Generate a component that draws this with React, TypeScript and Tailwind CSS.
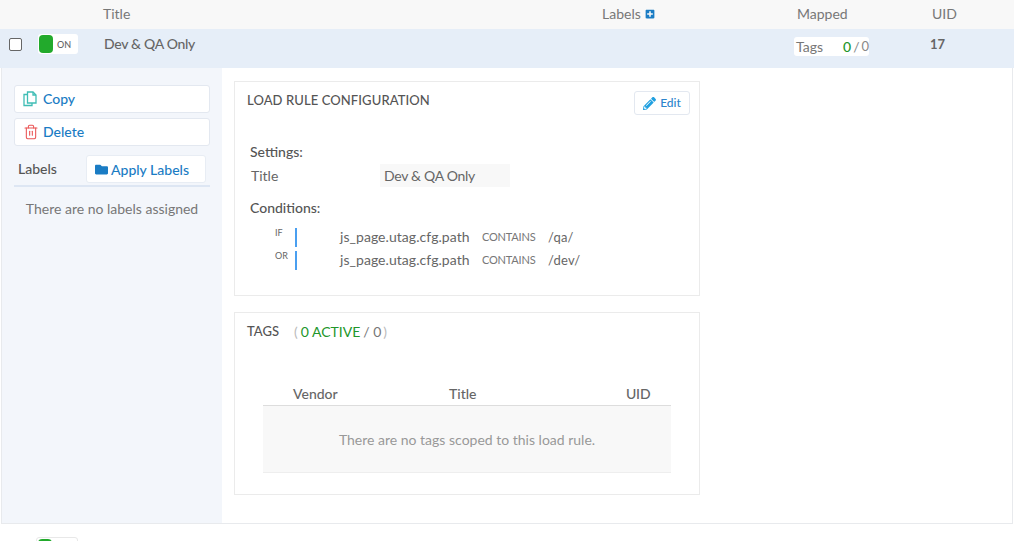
import React from "react";
import { Trash2 } from "lucide-react";
import { FaFolder, FaPencilAlt, FaPlusSquare } from "react-icons/fa";

function CopyIcon() {
  return (
    <svg width="14" height="16" viewBox="0 0 14 16" fill="none" stroke="#3fbdb5" strokeWidth="1.3" className="shrink-0">
      <path d="M4.500 1h5.500l3 3v8h-8.500z" />
      <path d="M10 1v3h3" />
      <path d="M4.500 3.500H1v11h8v-2.500" />
    </svg>
  );
}

function Toggle() {
  return (
    <div className="flex h-[20px] w-[40px] items-center rounded-[3px] bg-white pl-px">
      <div className="h-[18px] w-[14px] rounded-[4px] bg-[#22aa2c]" />
      <span className="ml-[4px] mt-[2px] text-[9px] font-medium tracking-[0.1px] text-[#666]">ON</span>
    </div>
  );
}

function SideButton({ icon, label }: { icon: React.ReactNode; label: string }) {
  return (
    <div className="flex h-[28px] items-center rounded-[3px] border border-[#e3e8f0] bg-white pb-px pl-[8px] text-[14px] font-medium text-[#1a7cc4]">
      <span className="flex w-[20px] shrink-0 items-center">{icon}</span>
      {label}
    </div>
  );
}

function Condition({ op, value }: { op: string; value: string }) {
  return (
    <div className="flex h-[23px] items-start">
      <span className="w-[48px] pl-[28px] text-[9px] leading-[12px] text-[#666]">{op}</span>
      <span className="mt-px h-[19px] w-[2px] bg-[#4a9ff0]" />
      <span className="ml-[43px] w-[142px] text-[14px] leading-[20px] tracking-[0.05px] text-[#666]">js_page.utag.cfg.path</span>
      <span className="w-[66px] text-[11px] leading-[20px] tracking-[-0.2px] text-[#777]">CONTAINS</span>
      <span className="text-[13px] leading-[20px] tracking-[0.2px] text-[#666]">{value}</span>
    </div>
  );
}

export default function App() {
  return (
    <div className="h-[541px] w-[1014px] overflow-hidden bg-white text-[14px] text-[#666] [font-family:Lato,'Liberation_Sans',sans-serif]">
      <div className="flex h-[29px] items-center bg-[#f8f8f8] pb-[2px] text-[14px] text-[#777]">
        <span className="ml-[103px] w-[499px]">Title</span>
        <span className="flex w-[195px] items-center gap-[4px]">
          Labels <FaPlusSquare className="mt-px h-[10px] w-[10px] text-[#1a7cc4]" />
        </span>
        <span className="w-[135px]">Mapped</span>
        <span>UID</span>
      </div>

      <div className="flex h-[39px] bg-[#e6eef8]">
        <div className="ml-[9px] mt-[9px] h-[13px] w-[13px] rounded-[2px] border border-[#666] bg-white" />
        <div className="ml-[16px] mt-[5px]">
          <Toggle />
        </div>
        <span className="ml-[26px] mt-[4px] w-[690px] font-medium tracking-[-0.3px] text-[#666]">Dev &amp; QA Only</span>
        <div className="mt-[8px] flex h-[19px] w-[75px] items-center rounded-[3px] bg-white pl-[2px] text-[#777]">
          <span className="w-[47px]">Tags</span>
          <span className="font-medium text-[#22962a]">0</span>
          <span className="ml-[2px] text-[#888]">/</span>
          <span className="ml-[2px] text-[13px] text-[#888]">0</span>
        </div>
        <span className="ml-[61px] mt-[6px] text-[13px] font-bold text-[#666]">17</span>
      </div>

      <div className="ml-px flex h-[456px] w-[1012px] border border-t-0 border-[#e8eaed]">
        <aside className="flex w-[220px] shrink-0 flex-col bg-[#f3f6fb] px-[12px] pt-[17px]">
          <div className="flex flex-col gap-[5px]">
            <SideButton icon={<CopyIcon />} label="Copy" />
            <SideButton icon={<Trash2 size={16} strokeWidth={1.6} color="#ea5455" />} label="Delete" />
          </div>
          <div className="mt-[9px] flex h-[32px] items-start border-b-2 border-[#dde6f3]">
            <span className="ml-[4px] mt-[3px] w-[68px] font-medium text-[#555]">Labels</span>
            <div className="flex h-[28px] w-[120px] items-center rounded-[3px] border border-[#e8edf4] bg-white pl-[8px] font-medium text-[#1a7cc4]">
              <FaFolder className="mr-[3px] h-[13px] w-[13px]" />
              Apply Labels
            </div>
          </div>
          <p className="mt-[11px] text-center text-[#777]">There are no labels assigned</p>
        </aside>

        <main className="w-[478px] pl-[12px] pt-[13px]">
          <section className="h-[215px] w-[466px] border border-[#ebebeb] pl-[12px]">
            <div className="flex items-start justify-between pr-[9px]">
              <h2 className="mt-[9px] text-[13px] font-medium tracking-[0.1px] text-[#555]">LOAD RULE CONFIGURATION</h2>
              <div className="mt-[9px] flex h-[24px] w-[56px] items-center justify-center gap-[4px] rounded-[3px] border border-[#e3e8f0] bg-white text-[12px] font-medium text-[#2b84cc]">
                <FaPencilAlt className="h-[13px] w-[13px] text-[#20a0e0]" />
                Edit
              </div>
            </div>
            <div className="ml-[3px] mt-[27px] font-medium leading-[20px] text-[#555]">Settings:</div>
            <div className="mt-[2px] flex h-[23px] items-center">
              <span className="ml-[4px] w-[129px] text-[#666]">Title</span>
              <span className="flex h-[23px] w-[130px] items-center bg-[#f8f8f8] pl-[4px] tracking-[-0.3px]">Dev &amp; QA Only</span>
            </div>
            <div className="ml-[3px] mt-[11px] font-medium leading-[20px] text-[#555]">Conditions:</div>
            <div className="mt-[9px]">
              <Condition op="IF" value="/qa/" />
              <Condition op="OR" value="/dev/" />
            </div>
          </section>

          <section className="mt-[16px] h-[183px] w-[466px] border border-[#ebebeb] pl-[12px]">
            <div className="mt-[8px] flex items-center">
              <span className="mt-px text-[13px] font-medium text-[#555]">TAGS</span>
              <span className="ml-[15px] text-[#bbb]">(</span>
              <span className="ml-[3px] text-[#22962a]">0 ACTIVE</span>
              <span className="ml-[3px] text-[#777]">/ 0</span>
              <span className="ml-[2px] text-[#bbb]">)</span>
            </div>
            <div className="ml-[16px] mt-[42px] w-[408px]">
              <div className="flex h-[22px] items-center border-b border-[#ddd] pb-[2px] font-medium text-[#666]">
                <span className="ml-[30px] w-[156px]">Vendor</span>
                <span className="w-[177px]">Title</span>
                <span className="tracking-[-0.2px]">UID</span>
              </div>
              <div className="flex h-[67px] items-center justify-center border-b border-[#eee] bg-[#f8f8f8] text-[#999]">
                There are no tags scoped to this load rule.
              </div>
            </div>
          </section>
        </main>
      </div>

      <div className="ml-[36px] mt-[13px] h-[20px] w-[42px] rounded-[3px] border border-[#e8e8e8] bg-white pl-px">
        <div className="mt-px h-[18px] w-[14px] rounded-[4px] bg-[#22aa2c]" />
      </div>
    </div>
  );
}
